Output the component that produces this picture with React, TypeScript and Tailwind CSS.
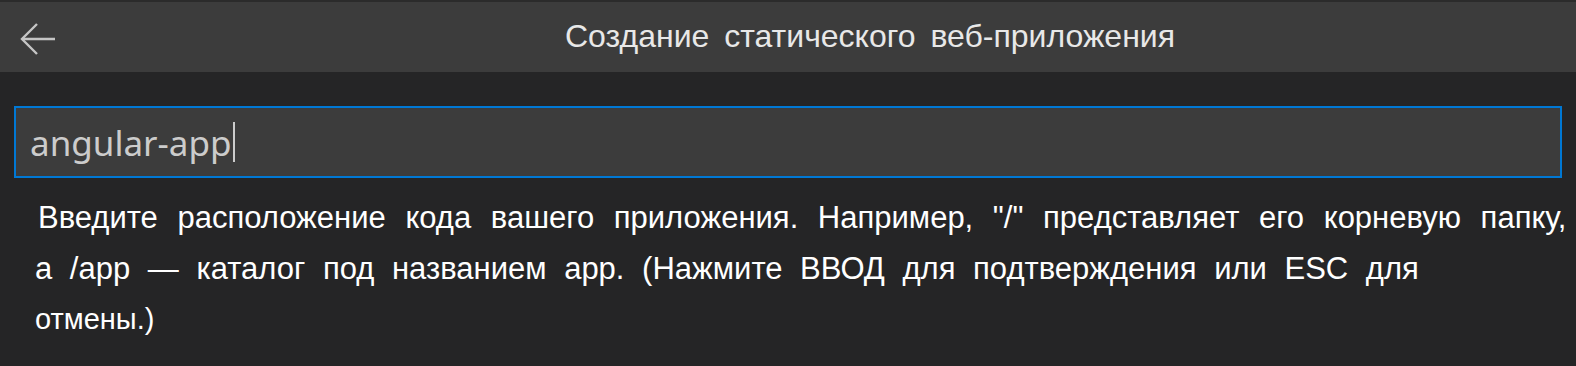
export default function App() {
  return (
    <div className="w-[1576px] h-[366px] overflow-hidden bg-[#252526] flex flex-col">
      <div className="h-[2px] bg-[#2b2b2b]" />
      {/* title bar */}
      <div className="h-[70px] bg-[#3c3c3c] relative flex items-center justify-center">
        <button className="absolute left-[18px] top-[19px] w-[40px] h-[36px] flex items-center justify-center">
          <svg width="38" height="34" viewBox="0 0 38 34" fill="none" stroke="#c5c5c5" strokeWidth="2.4">
            <path d="M18 2 L3 17 L18 32" />
            <path d="M3 17 H36" />
          </svg>
        </button>
        <span className="text-[32px] text-[#e8e8e8] font-['Liberation_Sans',Arial,sans-serif] [word-spacing:6px] mt-[-2px] ml-[164px]">
          Создание статического веб-приложения
        </span>
      </div>
      {/* input */}
      <div className="px-[14px] pt-[34px]">
        <div className="h-[72px] border-2 border-[#0078d4] bg-[#3c3c3c] flex items-center pl-[14px]">
          <span className="text-[35px] text-[#cccccc] font-['Noto_Sans',sans-serif] leading-none">angular-app</span>
          <span className="w-[2px] h-[40px] bg-[#cccccc] ml-[1px]" />
        </div>
      </div>
      {/* message */}
      <div className="pl-[35px] pt-[14px] text-[31px] leading-[51px] text-white font-['Liberation_Sans',Arial,sans-serif] whitespace-nowrap">
        <div className="[word-spacing:11px] pl-[3px]">
          Введите расположение кода вашего приложения. Например, "/" представляет его корневую папку,
        </div>
        <div className="[word-spacing:9px]">
          а /app — каталог под названием app. (Нажмите ВВОД для подтверждения или ESC для
        </div>
        <div className="text-[29px]">отмены.)</div>
      </div>
    </div>
  )
}
